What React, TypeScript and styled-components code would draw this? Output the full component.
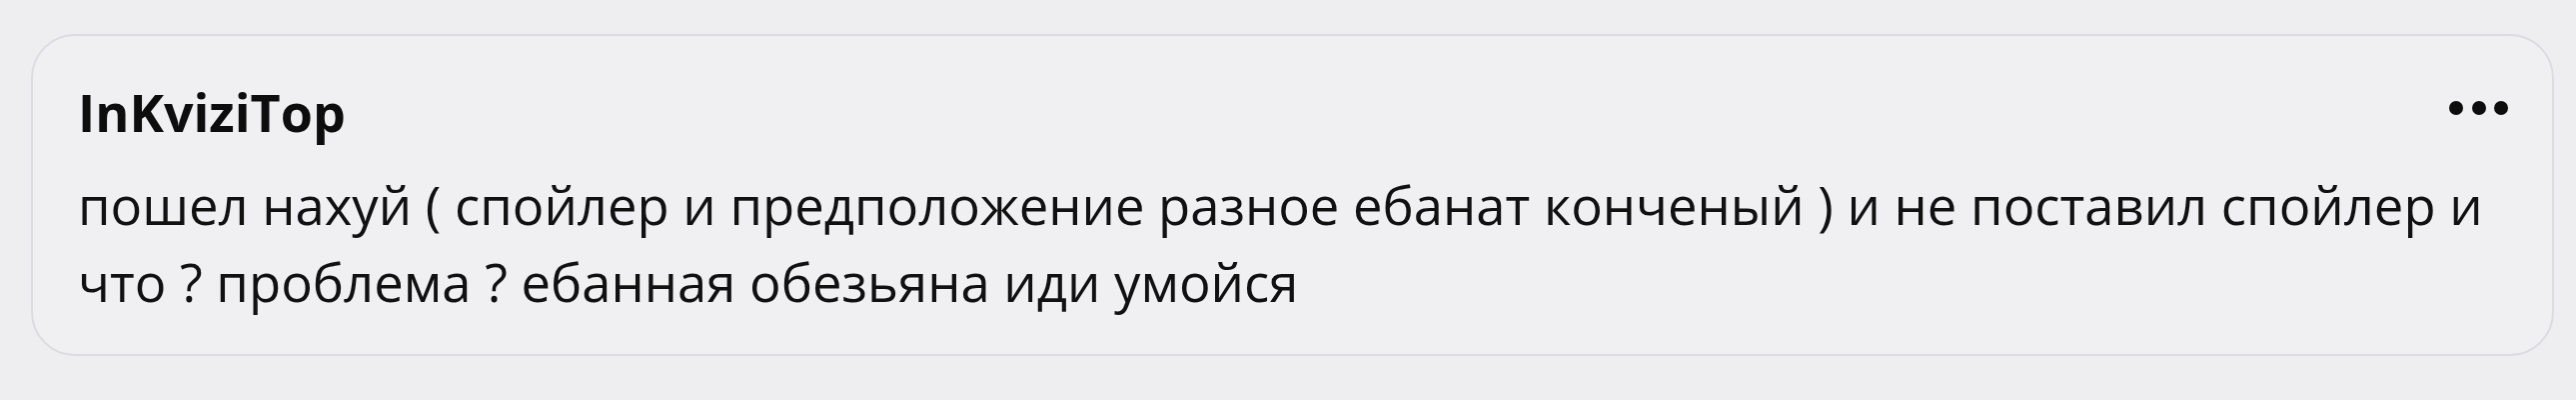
import React from "react";
import styled, { createGlobalStyle } from "styled-components";

const GlobalStyle = createGlobalStyle`
  html, body {
    margin: 0;
    padding: 0;
    background: #eeeef1;
  }
  body {
    font-family: "Open Sans", "Noto Sans", sans-serif;
    color: #111;
  }
`;

const Page = styled.div`
  width: 2578px;
  height: 400px;
  box-sizing: border-box;
  padding: 34px 22px 0 31px;
  background: #eeeef1;
`;

const Card = styled.article`
  box-sizing: border-box;
  height: 322px;
  border: 2px solid #dcdce0;
  border-radius: 44px;
  background: #f0f0f3;
  padding: 40px 44px 0 45px;
  display: flex;
  flex-direction: column;
`;

const Header = styled.header`
  display: flex;
  align-items: center;
  justify-content: space-between;
  height: 70px;
`;

const Author = styled.span`
  font-family: "Open Sans", "Noto Sans", sans-serif;
  font-weight: 700;
  font-size: 52px;
  color: #0d0d0d;
`;

const MoreButton = styled.button`
  display: flex;
  align-items: center;
  gap: 8.5px;
  padding: 0;
  border: none;
  background: none;
  cursor: pointer;
  margin-top: -6px;
`;

const Dot = styled.span`
  width: 14px;
  height: 14px;
  border-radius: 50%;
  background: #0d0d0d;
`;

const Body = styled.p`
  margin: 20px 0 0;
  font-family: "Open Sans", "Noto Sans", sans-serif;
  font-size: 52.6px;
  line-height: 77px;
  color: #111;
`;

export default function App() {
  return (
    <>
      <GlobalStyle />
      <Page>
        <Card>
          <Header>
            <Author>InKviziTop</Author>
            <MoreButton aria-label="Ещё">
              <Dot />
              <Dot />
              <Dot />
            </MoreButton>
          </Header>
          <Body>
            пошел нахуй ( спойлер и предположение разное ебанат конченый ) и не
            поставил спойлер и что ? проблема ? ебанная обезьяна иди умойся
          </Body>
        </Card>
      </Page>
    </>
  );
}
